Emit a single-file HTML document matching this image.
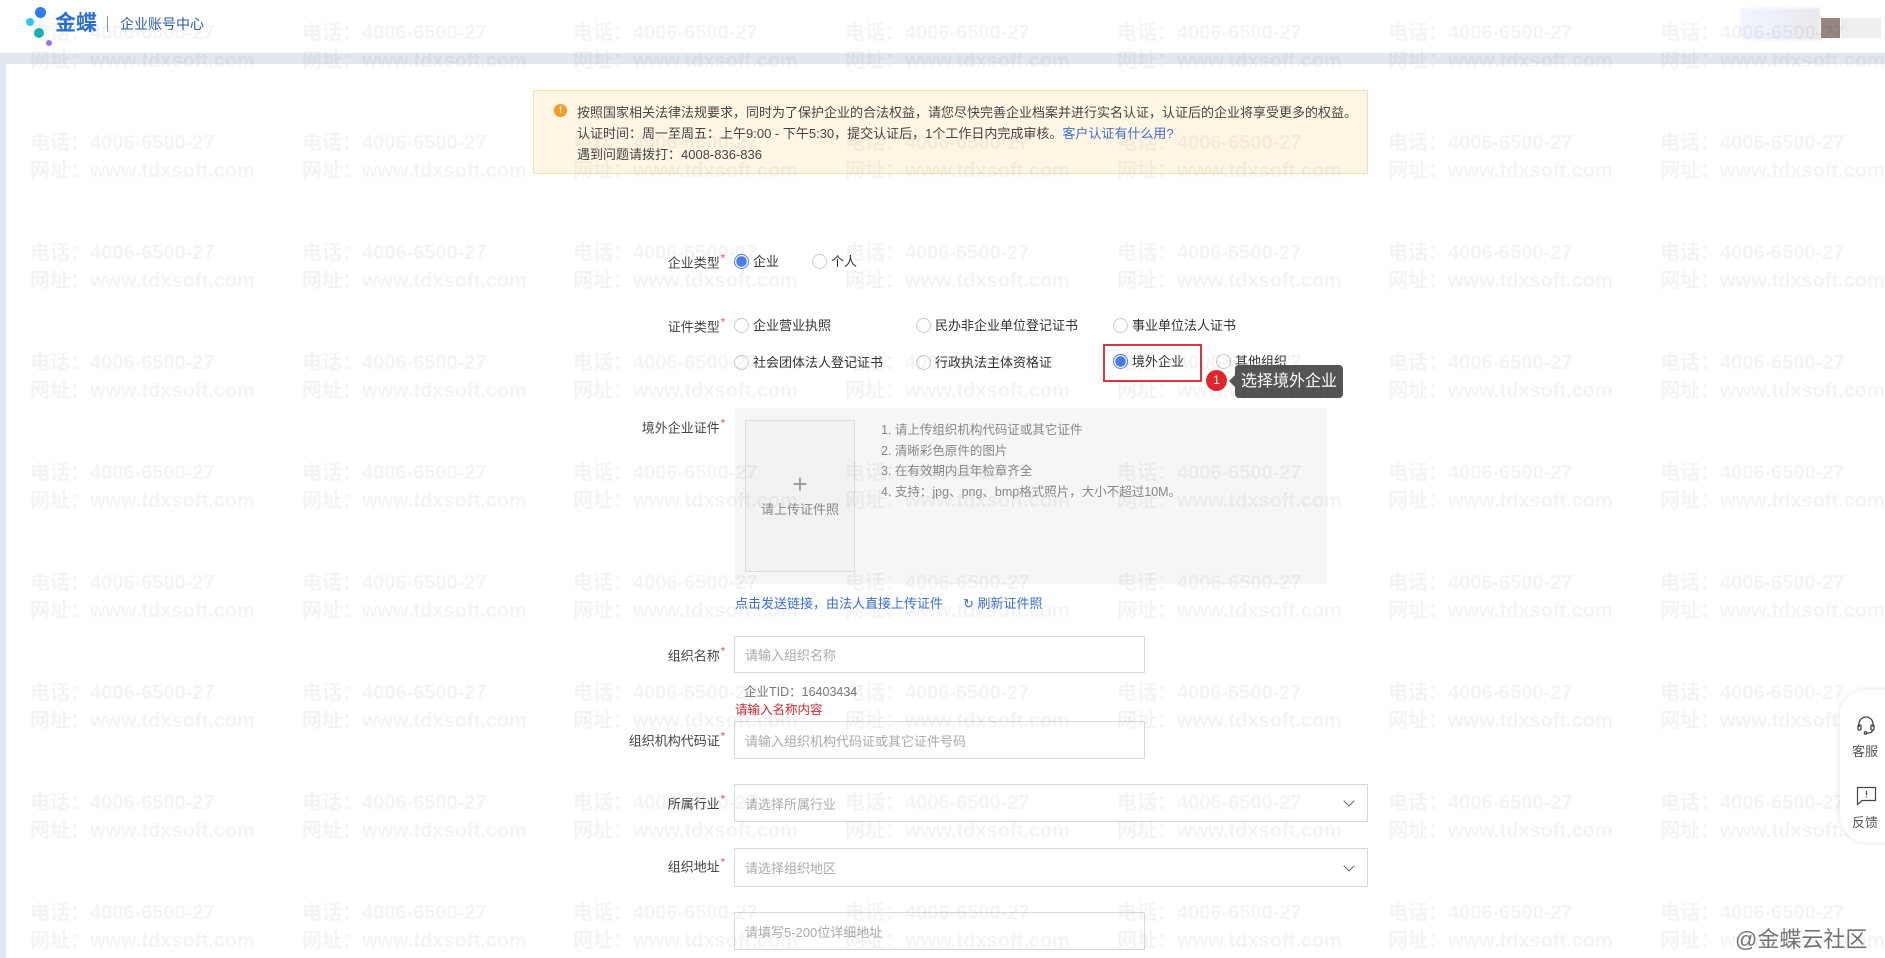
<!DOCTYPE html>
<html><head><meta charset="utf-8">
<style>
*{margin:0;padding:0;box-sizing:border-box}
body{width:1885px;height:958px;overflow:hidden;background:#fff;font-family:"Liberation Sans","Noto Sans CJK SC",sans-serif;color:#333;position:relative}
.abs{position:absolute}
.hdr{left:0;top:0;width:1885px;height:53px;background:#fff}
.band{left:0;top:53px;width:1885px;height:11px;background:#e3e7ef}
.lstrip{left:0;top:53px;width:6px;height:905px;background:#e3e7ef}
.dot{position:absolute;border-radius:50%}
.wm{position:absolute;font-weight:bold;font-size:20px;color:rgba(0,0,0,0.042);white-space:nowrap;pointer-events:none;z-index:50}
.note{left:533px;top:90px;width:835px;height:84px;background:#fff6e4;border:1px solid #f7e0b0;font-size:13px;color:#444}
.note div{position:absolute;left:43px;white-space:nowrap}
.lbl{position:absolute;font-size:13px;color:#444;text-align:right;white-space:nowrap;transform:translateY(-50%)}
.lbl i{color:#e5484d;font-style:normal;font-size:11px;vertical-align:top;margin-left:1px}
.rad{position:absolute;font-size:13px;color:#333;white-space:nowrap;transform:translateY(-50%);padding-left:19px;line-height:16px}
.rad:before{content:"";position:absolute;left:0;top:0;width:15px;height:15px;border:1px solid #ccc;border-radius:50%;box-sizing:border-box;background:#fff}
.rad.on:before{border:1px solid #4a7cf0;background:radial-gradient(circle,#4a7cf0 0 5px,#fff 5.5px)}
.inp{position:absolute;border:1px solid #d9d9d9;background:#fff;font-size:13px;color:#aaa;padding-left:10px;display:flex;align-items:center}
.chev{position:absolute;right:14px;top:50%;width:8px;height:8px;border-right:1.3px solid #666;border-bottom:1.3px solid #666;transform:translateY(-75%) rotate(45deg)}
</style></head><body>
<div class="abs hdr"></div>
<div class="abs band"></div>
<div class="abs lstrip"></div>
<div class="dot" style="left:35px;top:7px;width:11px;height:11px;background:#2b7de9"></div>
<div class="dot" style="left:26px;top:18px;width:8px;height:8px;background:#2fc6ef"></div>
<div class="dot" style="left:34px;top:28px;width:10px;height:10px;background:#1cb5b5"></div>
<div class="dot" style="left:46px;top:40px;width:6px;height:6px;background:#9a6ff0"></div>
<div class="abs" style="left:55px;top:11px;font-size:21px;font-weight:bold;color:#2a6fd6;line-height:26px">金蝶</div>
<div class="abs" style="left:107px;top:16px;width:1px;height:16px;background:#7a96c4"></div>
<div class="abs" style="left:120px;top:15px;font-size:14px;color:#2a5fa8;line-height:18px">企业账号中心</div>
<div class="abs" style="left:1740px;top:8px;width:80px;height:32px;background:linear-gradient(90deg,#f3f5fc,#eef0f8,#e8e8ec);filter:blur(1px)"></div>
<div class="abs" style="left:1821px;top:18px;width:19px;height:20px;background:#988582"></div>
<div class="abs" style="left:1841px;top:18px;width:40px;height:20px;background:#eee"></div>

<div class="abs note">
<span class="abs" style="left:20px;top:13px;width:13px;height:13px;border-radius:50%;background:#f59a23;color:#fff;font-size:10px;text-align:center;line-height:13px;font-weight:bold">!</span>
<div style="top:11px">按照国家相关法律法规要求，同时为了保护企业的合法权益，请您尽快完善企业档案并进行实名认证，认证后的企业将享受更多的权益。</div>
<div style="top:32px">认证时间：周一至周五：上午9:00 - 下午5:30，提交认证后，1个工作日内完成审核。<span style="color:#3b6fd6">客户认证有什么用?</span></div>
<div style="top:53px">遇到问题请拨打：4008-836-836</div>
</div>

<div class="lbl" style="right:1160px;top:262px">企业类型<i>*</i></div>
<div class="rad on" style="left:734px;top:262px">企业</div>
<div class="rad" style="left:812px;top:262px">个人</div>

<div class="lbl" style="right:1160px;top:326px">证件类型<i>*</i></div>
<div class="rad" style="left:734px;top:326px">企业营业执照</div>
<div class="rad" style="left:916px;top:326px">民办非企业单位登记证书</div>
<div class="rad" style="left:1113px;top:326px">事业单位法人证书</div>
<div class="rad" style="left:734px;top:363px">社会团体法人登记证书</div>
<div class="rad" style="left:916px;top:363px">行政执法主体资格证</div>
<div class="rad on" style="left:1113px;top:362px">境外企业</div>
<div class="rad" style="left:1216px;top:362px">其他组织</div>
<div class="abs" style="left:1103px;top:344px;width:99px;height:38px;border:2px solid #d9363e"></div>
<div class="abs" style="left:1206px;top:370px;width:21px;height:21px;border-radius:50%;background:#e3262e;color:#fff;font-size:12px;text-align:center;line-height:21px;z-index:5">1</div>
<div class="abs" style="left:1235px;top:365px;width:108px;height:33px;background:#555;border-radius:4px;color:#fff;font-size:16px;line-height:33px;text-align:center;z-index:5">选择境外企业</div>
<div class="abs" style="left:1229px;top:375px;width:0;height:0;border-top:6px solid transparent;border-bottom:6px solid transparent;border-right:6px solid #555;z-index:5"></div>

<div class="lbl" style="right:1160px;top:427px">境外企业证件<i>*</i></div>
<div class="abs" style="left:735px;top:408px;width:592px;height:176px;background:#f5f6f8"></div>
<div class="abs" style="left:745px;top:420px;width:110px;height:152px;background:#f1f2f4;border:1px solid #dcdcdc"></div>
<div class="abs" style="left:745px;top:470px;width:110px;text-align:center;font-size:26px;color:#999;line-height:28px;font-weight:300">+</div>
<div class="abs" style="left:745px;top:499px;width:110px;text-align:center;font-size:13px;color:#888">请上传证件照</div>
<div class="abs" style="left:881px;top:420px;font-size:12.5px;color:#888;line-height:20.5px">1. 请上传组织机构代码证或其它证件<br>2. 清晰彩色原件的图片<br>3. 在有效期内且年检章齐全<br>4. 支持：jpg、png、bmp格式照片，大小不超过10M。</div>
<div class="abs" style="left:735px;top:593px;font-size:13px;color:#3b6fd6;white-space:nowrap">点击发送链接，由法人直接上传证件</div>
<div class="abs" style="left:963px;top:593px;font-size:13px;color:#3b6fd6;white-space:nowrap">↻ 刷新证件照</div>

<div class="lbl" style="right:1160px;top:655px">组织名称<i>*</i></div>
<div class="inp" style="left:734px;top:636px;width:411px;height:37px">请输入组织名称</div>
<div class="abs" style="left:744px;top:681px;font-size:12.5px;color:#777">企业TID：16403434</div>
<div class="abs" style="left:735px;top:699px;font-size:12.5px;color:#d3262e">请输入名称内容</div>

<div class="lbl" style="right:1160px;top:740px">组织机构代码证<i>*</i></div>
<div class="inp" style="left:734px;top:721px;width:411px;height:38px">请输入组织机构代码证或其它证件号码</div>

<div class="lbl" style="right:1160px;top:803px">所属行业<i>*</i></div>
<div class="inp" style="left:734px;top:784px;width:634px;height:38px">请选择所属行业<span class="chev"></span></div>

<div class="lbl" style="right:1160px;top:866px">组织地址<i>*</i></div>
<div class="inp" style="left:734px;top:848px;width:634px;height:39px">请选择组织地区<span class="chev"></span></div>

<div class="inp" style="left:734px;top:912px;width:411px;height:38px">请填写5-200位详细地址</div>

<div class="abs" style="left:1840px;top:690px;width:60px;height:152px;background:#fff;border-radius:26px 0 0 26px;box-shadow:0 0 8px rgba(0,0,0,0.1);z-index:60"></div>
<svg class="abs" style="left:1855px;top:714px;z-index:61" width="22" height="22" viewBox="0 0 22 22" fill="none" stroke="#444" stroke-width="1.3"><path d="M4 13V10a7 7 0 0 1 14 0v3"/><rect x="3" y="11" width="3" height="5" rx="1"/><rect x="16" y="11" width="3" height="5" rx="1"/><path d="M17.5 16c0 2-2 3-6 3"/><circle cx="10.5" cy="19" r="1.2"/></svg>
<div class="abs" style="left:1852px;top:741px;font-size:13px;color:#555;z-index:61">客服</div>
<svg class="abs" style="left:1856px;top:786px;z-index:61" width="22" height="20" viewBox="0 0 22 20" fill="none" stroke="#444" stroke-width="1.2"><path d="M1.5 1.5h18v13H6l-4.5 4z"/><path d="M10.5 5v4M10.5 10.5v1"/></svg>
<div class="abs" style="left:1852px;top:812px;font-size:13px;color:#555;z-index:61">反馈</div>
<div class="abs" style="left:1735px;top:922px;font-size:22px;color:rgba(70,70,70,0.75);z-index:61">@金蝶云社区</div>

<div id="wms"></div>
<script>
var h='';var xs=[30,302,573,845,1117,1388,1660];
for(var r=0;r<9;r++){var y=16+r*110;for(var c=0;c<7;c++){h+='<div class="wm" style="left:'+xs[c]+'px;top:'+y+'px">电话：4006-6500-27</div><div class="wm" style="left:'+xs[c]+'px;top:'+(y+28)+'px">网址：www.tdxsoft.com</div>';}}
document.getElementById('wms').innerHTML=h;
</script>
</body></html>
